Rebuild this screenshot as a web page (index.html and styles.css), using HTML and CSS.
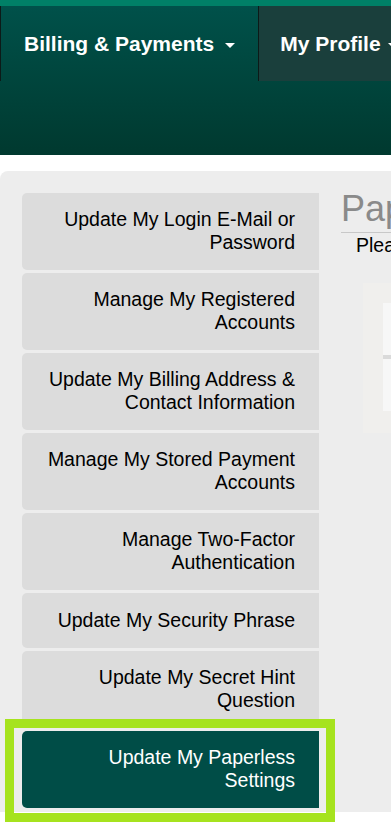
FILE: index.html
```html
<!DOCTYPE html>
<html lang="en">
<head>
    <meta charset="UTF-8">
    <meta name="viewport" content="width=device-width, initial-scale=1.0">
    <title>Paperless Settings - My Profile</title>
    <link rel="stylesheet" href="styles.css">
</head>
<body>
    <!-- Top bar -->
    <div class="top-stripe"></div>
    <header class="main-header">
        <ul class="nav-menu">
            <li class="nav-item nav-billing">Billing &amp; Payments <span class="caret"></span></li>
            <li class="nav-item nav-profile">My Profile <span class="caret"></span></li>
        </ul>
    </header>

    <!-- Profile panel -->
    <main class="panel">
        <aside class="side-menu">
            <a class="side-link" href="#">Update My Login E-Mail or Password</a>
            <a class="side-link" href="#">Manage My Registered Accounts</a>
            <a class="side-link" href="#">Update My Billing Address &amp; Contact Information</a>
            <a class="side-link" href="#">Manage My Stored Payment Accounts</a>
            <a class="side-link" href="#">Manage Two-Factor Authentication</a>
            <a class="side-link" href="#">Update My Security Phrase</a>
            <a class="side-link" href="#">Update My Secret Hint Question</a>
            <a class="side-link active" href="#">Update My Paperless Settings</a>
        </aside>

        <section class="content">
            <h1 class="content-title">Paperless Settings</h1>
            <p class="content-intro">Please select how you would like to receive your bills.</p>
            <div class="settings-box">
                <div class="settings-list">
                    <div class="settings-row"></div>
                    <div class="settings-row"></div>
                </div>
            </div>
        </section>
    </main>
</body>
</html>
```

FILE: styles.css
```css
/* General styles */
html {
    overflow-x: hidden;
}

body {
    font-family: 'Liberation Sans', Arial, sans-serif;
    margin: 0;
    padding: 0 0 20px 0;
    background: #ffffff;
    color: #000;
    overflow-x: hidden;
}

.top-stripe {
    height: 6px;
    background: #008067;
}

/* Header / navigation */
.main-header {
    height: 149px;
    background: linear-gradient(180deg, #00514a, #00392f);
}

.nav-menu {
    display: flex;
    list-style: none;
    margin: 0;
    padding: 0;
    white-space: nowrap;
}

.nav-item {
    display: flex;
    align-items: center;
    flex-shrink: 0;
    height: 75px;
    padding: 0 23px;
    color: #fff;
    font-size: 21px;
    font-weight: bold;
    border-right: 1px solid #0c1a18;
}

.nav-billing {
    border-left: 1px solid #0c1a18;
}

.nav-profile {
    background: #1a3f3c;
    padding-left: 21px;
}

.caret {
    display: inline-block;
    margin-left: 11px;
    margin-top: 3px;
    border-left: 5px solid transparent;
    border-right: 5px solid transparent;
    border-top: 5px solid #fff;
}

.nav-profile .caret {
    margin-left: 7px;
}

/* Panel */
.panel {
    display: flex;
    margin-top: 16px;
    padding: 22px 0 4px 22px;
    background: #ededed;
    border-radius: 8px 0 0 0;
}

/* Side menu */
.side-menu {
    display: flex;
    flex-direction: column;
    gap: 3px;
    flex: 0 0 297px;
}

.side-link {
    position: relative;
    display: flex;
    align-items: center;
    justify-content: flex-end;
    box-sizing: border-box;
    min-height: 55px;
    padding: 15px 24px 16px 20px;
    background: #dcdcdc;
    border-radius: 5px 0 0 5px;
    color: #000;
    text-decoration: none;
    text-align: right;
    font-size: 19.5px;
    line-height: 23px;
}

.side-link.active {
    background: #004d47;
    color: #fff;
}

/* highlight frame around the active link */
.side-link.active::after {
    content: "";
    position: absolute;
    top: -12px;
    left: -17px;
    right: -16px;
    bottom: -14px;
    border: 9px solid #a6e31e;
}

/* Content */
.content {
    flex: 1;
    min-width: 0;
    padding-left: 22px;
    white-space: nowrap;
    overflow: hidden;
}

.content-title {
    margin: 0;
    padding-bottom: 7px;
    border-bottom: 1px solid #c8c8c8;
    font-size: 36px;
    font-weight: normal;
    line-height: 32px;
    color: #8a8a8a;
}

.content-intro {
    margin: 1px 0 0 15px;
    font-size: 19.5px;
    line-height: 23px;
}

.settings-box {
    margin: 26px 0 0 22px;
    height: 110px;
    padding: 20px 0 20px 20px;
    background: #f0efed;
}

.settings-list {
    background: #f7f7f7;
}

.settings-row {
    height: 52px;
}

.settings-row + .settings-row {
    border-top: 4px solid #dadada;
}
```
